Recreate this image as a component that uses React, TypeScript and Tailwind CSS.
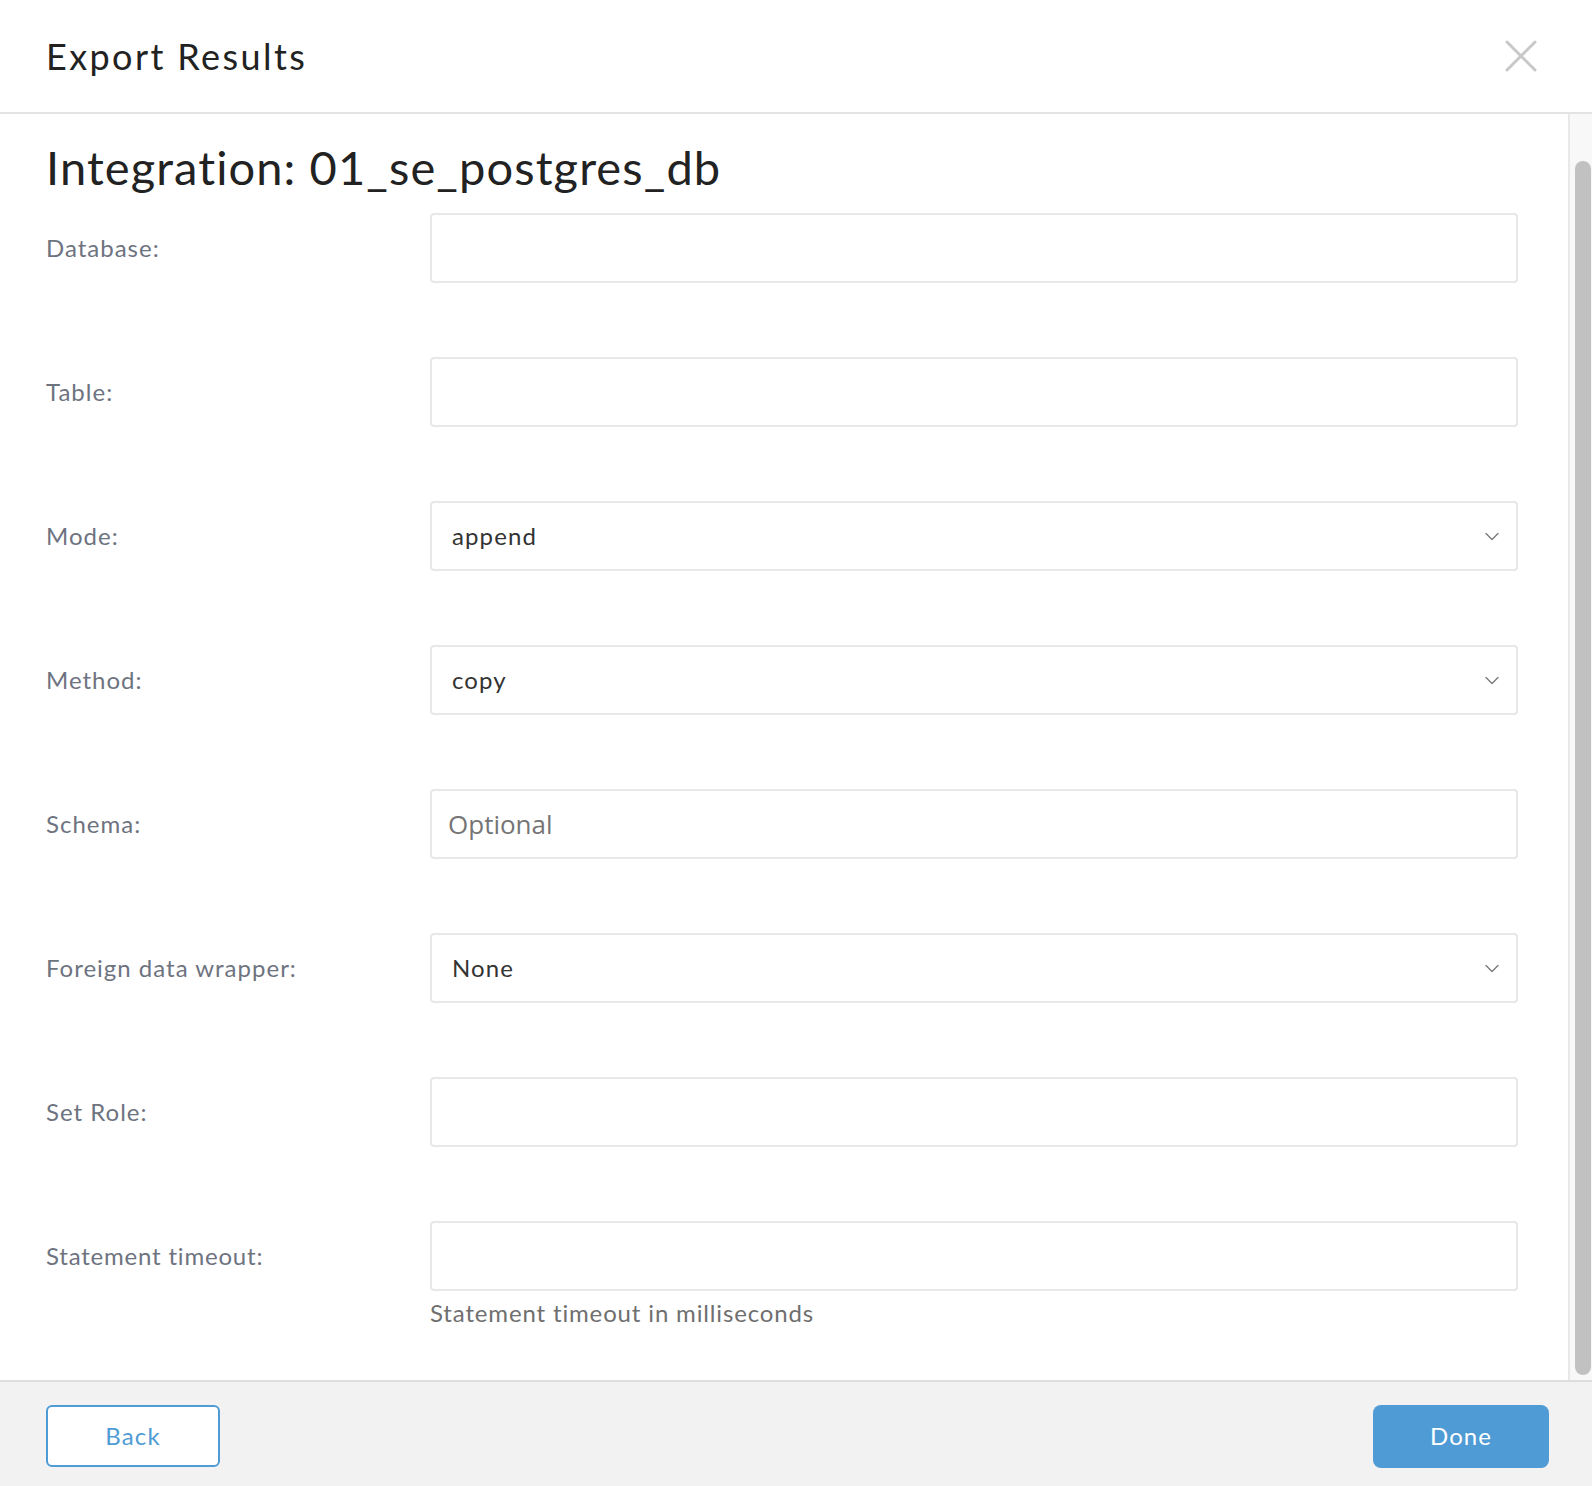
import React from "react";

const fields = [
  { label: "Database:", kind: "text" },
  { label: "Table:", kind: "text" },
  { label: "Mode:", kind: "select", value: "append" },
  { label: "Method:", kind: "select", value: "copy" },
  { label: "Schema:", kind: "placeholder", value: "Optional" },
  { label: "Foreign data wrapper:", kind: "select", value: "None" },
  { label: "Set Role:", kind: "text" },
];

function Chevron() {
  return (
    <svg width="14" height="9" viewBox="0 0 14 9" fill="none">
      <path d="M1 1.5 L7 7.5 L13 1.5" stroke="#7a7a7a" strokeWidth="1.4" strokeLinecap="round" strokeLinejoin="round" />
    </svg>
  );
}

function Field({ kind, value }: { kind: string; value?: string }) {
  if (kind === "select") {
    return (
      <div className="h-[70px] w-full bg-white border-2 border-[#e8e8e8] rounded-[4px] flex items-center justify-between pl-[20px] pr-[17px]">
        <span className="text-[24px] text-[#333333] tracking-[1.1px]">{value}</span>
        <Chevron />
      </div>
    );
  }
  if (kind === "placeholder") {
    return (
      <div className="h-[70px] w-full bg-white border-2 border-[#e8e8e8] rounded-[4px] flex items-center pl-[16px]">
        <span className="text-[26px] text-[#757575] font-['Open_Sans'] tracking-normal">{value}</span>
      </div>
    );
  }
  return <div className="h-[70px] w-full bg-white border-2 border-[#e8e8e8] rounded-[4px]" />;
}

export default function App() {
  return (
    <div className="w-[1592px] h-[1486px] flex flex-col bg-white font-['Lato',sans-serif] [font-variant-ligatures:none]">
      {/* Header */}
      <div className="h-[114px] shrink-0 border-b-2 border-[#e3e3e3] flex items-center justify-between pl-[46px] pr-[55px]">
        <h1 className="text-[36px] text-[#222222] tracking-[2.4px]">Export Results</h1>
        <svg width="32" height="32" viewBox="0 0 32 32" fill="none">
          <path d="M2 2 L30 30 M30 2 L2 30" stroke="#c8c8c8" strokeWidth="3" strokeLinecap="round" />
        </svg>
      </div>

      {/* Body */}
      <div className="flex-1 flex min-h-0">
        <div className="flex-1 pl-[46px] pr-[50px]">
          <div className="h-[99px] flex items-center pt-[8px]">
            <h2 className="text-[47px] text-[#222222] tracking-[1.1px]">Integration: 01_se_postgres_db</h2>
          </div>
          <div className="flex flex-col gap-[74px]">
            {fields.map((f) => (
              <div key={f.label} className="flex items-center">
                <div className="w-[384px] shrink-0 text-[24px] text-[#6e7380] tracking-[1px]">{f.label}</div>
                <div className="flex-1">
                  <Field kind={f.kind} value={f.value} />
                </div>
              </div>
            ))}
            <div className="flex items-start">
              <div className="w-[384px] shrink-0 h-[70px] flex items-center text-[24px] text-[#6e7380] tracking-[0.8px]">
                Statement timeout:
              </div>
              <div className="flex-1">
                <Field kind="text" />
                <p className="mt-[4px] text-[24px] text-[#6f6f6f] tracking-[0.85px]">Statement timeout in milliseconds</p>
              </div>
            </div>
          </div>
        </div>
        {/* Scrollbar */}
        <div className="w-[24px] shrink-0 bg-[#f8f8f8] border-l-2 border-[#e8e8e8] pt-[47px] pb-[5px] pl-[5px] pr-[1px]">
          <div className="h-full w-full rounded-full bg-[#c1c1c1]" />
        </div>
      </div>

      {/* Footer */}
      <div className="h-[106px] shrink-0 border-t-2 border-[#dddddd] bg-[#f2f2f2] flex items-center justify-between pl-[46px] pr-[43px] pt-[4px]">
        <button className="w-[174px] h-[62px] bg-white border-2 border-[#4f9bd5] rounded-[6px] text-[24px] text-[#4f9bd5] tracking-[1.2px]">
          Back
        </button>
        <button className="w-[176px] h-[63px] bg-[#4f9bd5] rounded-[8px] text-[24px] text-white tracking-[1px]">
          Done
        </button>
      </div>
    </div>
  );
}
